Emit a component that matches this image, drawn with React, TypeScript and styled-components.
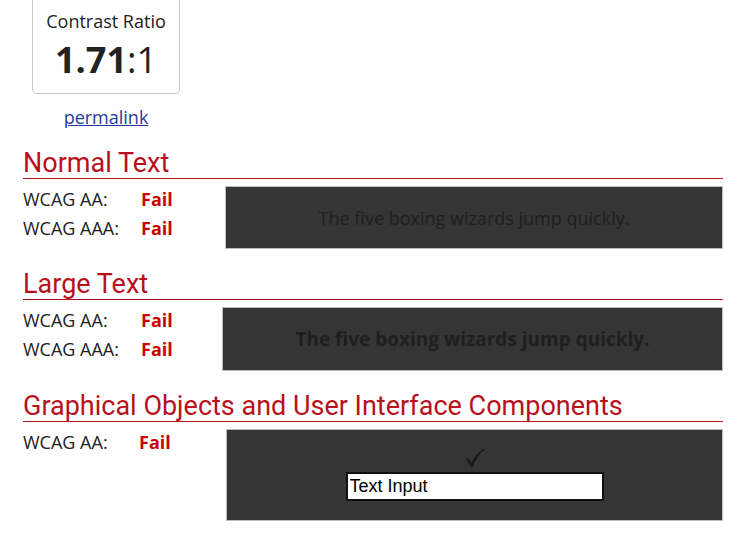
import React from 'react';
import styled, { createGlobalStyle } from 'styled-components';

const GlobalStyle = createGlobalStyle`
  body {
    margin: 0;
    background: #fff;
    font-family: "Open Sans", "Liberation Sans", sans-serif;
    color: #222;
    overflow: hidden;
  }
`;

const Page = styled.div`
  width: 700px;
  padding: 0 0 0 23px;
`;

const Summary = styled.div`
  display: inline-flex;
  flex-direction: column;
  align-items: center;
  margin-left: 9px;
  margin-top: -8px;
`;

const RatioCard = styled.div`
  width: 146px;
  border: 1px solid #c8c8c8;
  border-radius: 5px;
  padding: 16px 0 11px;
  text-align: center;
`;

const RatioLabel = styled.div`
  font-size: 18px;
  line-height: 24px;
  color: #222;
`;

const RatioValue = styled.div`
  margin-top: 5px;
  font-size: 36px;
  line-height: 44px;
  color: #222;

  b {
    font-weight: 700;
  }
`;

const Permalink = styled.a`
  margin-top: 11px;
  font-size: 18px;
  line-height: 24px;
  color: #1f3b9c;
  text-decoration: underline;
`;

const Section = styled.section<{ first?: boolean }>`
  margin-top: ${({ first }) => (first ? '19px' : '20px')};
`;

const Heading = styled.h2`
  margin: 0;
  font-family: Roboto, "Liberation Sans", sans-serif;
  font-weight: 400;
  font-size: 27px;
  line-height: 30px;
  color: #b8111c;
  border-bottom: 1px solid #b8111c;
`;

const Body = styled.div<{ labelWidth: number }>`
  display: grid;
  grid-template-columns: ${({ labelWidth }) => labelWidth}px 1fr;
  margin-top: 6px;
`;

const Results = styled.div`
  display: flex;
  flex-direction: column;
`;

const ResultRow = styled.div<{ labelWidth: number }>`
  display: grid;
  grid-template-columns: ${({ labelWidth }) => labelWidth}px auto;
  font-size: 18px;
  line-height: 29px;
  color: #222;
`;

const Fail = styled.span`
  font-weight: 700;
  color: #c00;
`;

const Sample = styled.div<{ height: number; bold?: boolean }>`
  height: ${({ height }) => height}px;
  box-sizing: border-box;
  margin-top: 1px;
  background: #353535;
  border: 1px solid #bdbdbd;
  display: flex;
  align-items: center;
  justify-content: center;
  font-size: ${({ bold }) => (bold ? '19px' : '18px')};
  font-weight: ${({ bold }) => (bold ? 700 : 400)};
  color: #1f1f1f;
`;

const WidgetSample = styled(Sample)`
  flex-direction: column;
  justify-content: flex-start;
  padding-top: 18px;
`;

const CheckMark = styled.svg`
  display: block;
  width: 20px;
  height: 20px;
  color: #1a1a1a;
`;

const TextInput = styled.input`
  margin-top: 4px;
  width: 258px;
  height: 29px;
  box-sizing: border-box;
  border: 2px solid #111;
  padding: 0 2px;
  background: #fff;
  font-family: "Liberation Sans", Arial, sans-serif;
  font-size: 18px;
  color: #000;
  outline: none;
`;

const rows = (levels: string[], labelWidth: number) => (
  <Results>
    {levels.map((level) => (
      <ResultRow key={level} labelWidth={labelWidth}>
        <span>WCAG {level}:</span>
        <Fail>Fail</Fail>
      </ResultRow>
    ))}
  </Results>
);

const sentence = 'The five boxing wizards jump quickly.';

export default function App() {
  return (
    <Page>
      <GlobalStyle />
      <Summary>
        <RatioCard>
          <RatioLabel>Contrast Ratio</RatioLabel>
          <RatioValue>
            <b>1.71</b>:1
          </RatioValue>
        </RatioCard>
        <Permalink href="#">permalink</Permalink>
      </Summary>

      <Section first>
        <Heading>Normal Text</Heading>
        <Body labelWidth={202}>
          {rows(['AA', 'AAA'], 118)}
          <Sample height={63}>{sentence}</Sample>
        </Body>
      </Section>

      <Section>
        <Heading>Large Text</Heading>
        <Body labelWidth={199}>
          {rows(['AA', 'AAA'], 118)}
          <Sample height={64} bold>
            {sentence}
          </Sample>
        </Body>
      </Section>

      <Section>
        <Heading>Graphical Objects and User Interface Components</Heading>
        <Body labelWidth={203}>
          {rows(['AA'], 116)}
          <WidgetSample height={92}>
            <CheckMark viewBox="0 0 20 20" aria-label="check">
              <path
                fill="currentColor"
                d="M1 11.2 L2.6 9.8 L6.6 14.2 C9.8 8.6 13.8 4 19 0.6 L19.6 1.4 C14.8 5.4 10.8 11.4 7.6 19.2 L6.2 19.2 Z"
              />
            </CheckMark>
            <TextInput defaultValue="Text Input" readOnly />
          </WidgetSample>
        </Body>
      </Section>
    </Page>
  );
}
